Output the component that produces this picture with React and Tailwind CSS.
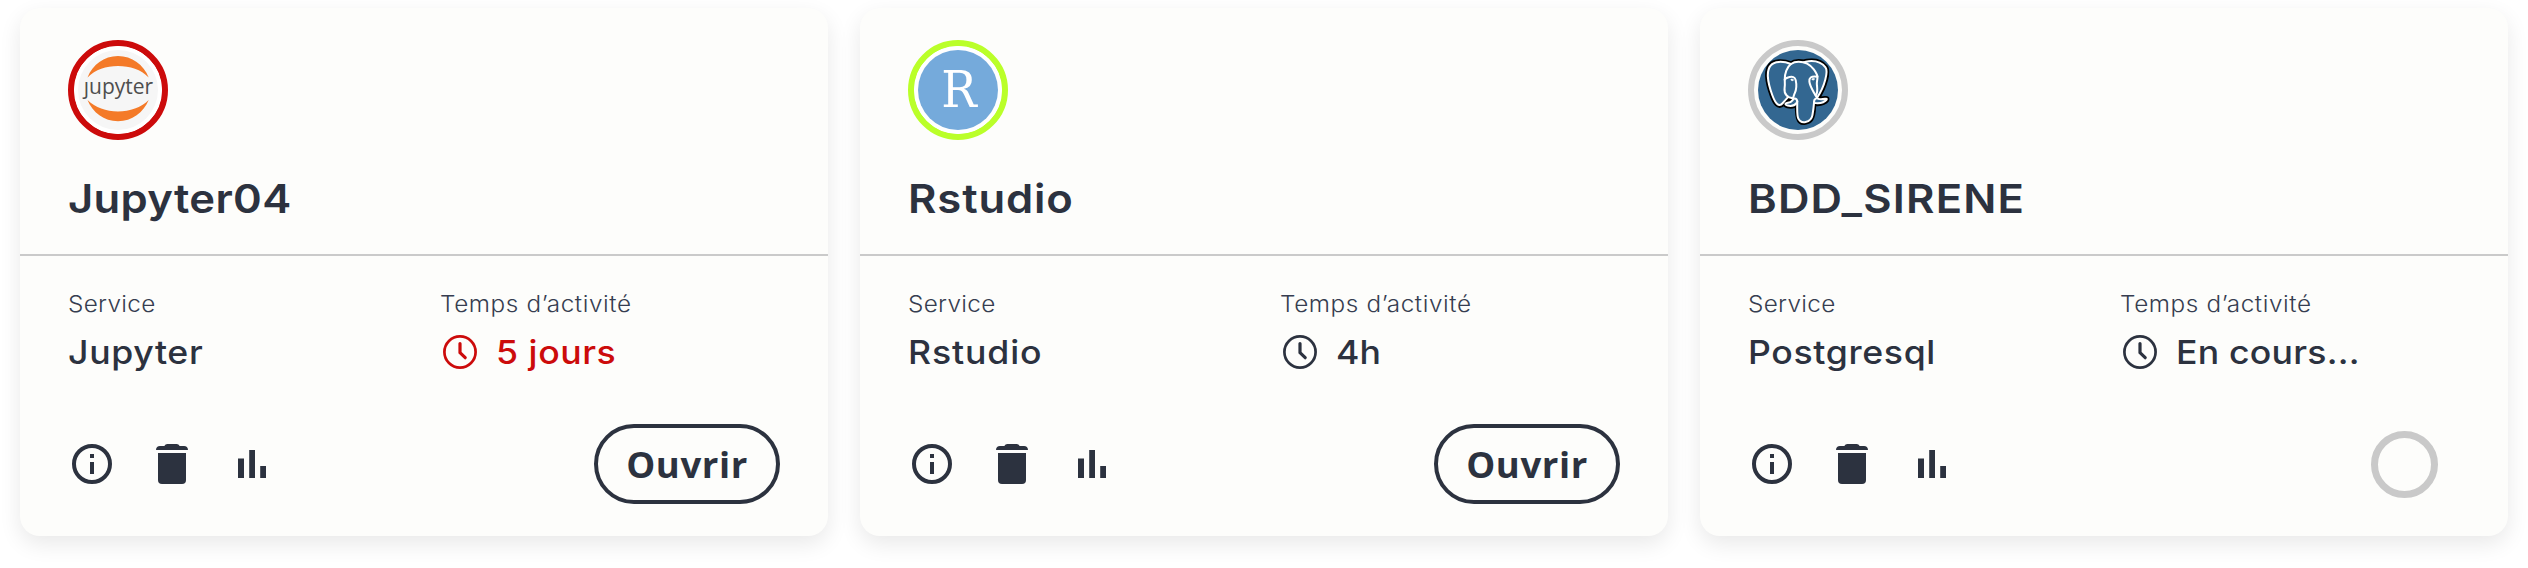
import React from "react";

function JupyterLogo() {
  return (
    <svg viewBox="0 0 100 100" className="block size-full">
      <circle cx="50" cy="50" r="50" fill="#fff" />
      <circle cx="50" cy="50" r="40" fill="#f6f6f6" />
      <path d="M19.500 37.500C24.500 24.500 36 16 50 16s25.500 8.500 30.700 21.500C73 29.500 62 26 50 26S27.500 29.500 19.500 37.500z" fill="#f47a28" />
      <path d="M19.500 60C24.500 72.500 36 81.200 50 81.200S75.500 72.500 80.700 60C73 67.500 62 71.400 50 71.400S27.500 67.500 19.500 60z" fill="#f47a28" />
      <text x="50.500" y="54.400" textAnchor="middle" fontFamily="Open Sans, Noto Sans, sans-serif" fontSize="21" fill="#4e4e4e">
        ȷupyter
      </text>
    </svg>
  );
}

function RstudioLogo() {
  return (
    <svg viewBox="0 0 100 100" className="block size-full">
      <circle cx="50" cy="50" r="50" fill="#fff" />
      <circle cx="50" cy="50" r="40" fill="#75aadb" />
      <text x="33.200" y="66.700" fontFamily="DejaVu Serif, serif" fontSize="50.500" textLength="35.500" lengthAdjust="spacingAndGlyphs" fill="#fff">
        R
      </text>
    </svg>
  );
}

function PostgresLogo() {
  return (
    <svg viewBox="0 0 100 100" className="block size-full">
      <circle cx="50" cy="50" r="40" fill="#336791" />
      <svg x="17" y="18.300" width="64.600" height="66.600" viewBox="0 0 432.071 445.383">
        <path
          fill="#000"
          stroke="#000"
          strokeWidth="37.400"
          d="M323.205,324.227c2.833-23.601,1.984-27.062,19.563-23.239l4.463,0.392c13.517,0.615,31.199-2.174,41.587-7c22.362-10.376,35.622-27.7,13.572-23.148c-50.297,10.376-53.755-6.655-53.755-6.655c53.111-78.803,75.313-178.836,56.149-203.322C352.514-5.534,262.036,26.049,260.522,26.869l-0.482,0.089c-9.938-2.062-21.06-3.294-33.554-3.496c-22.761-0.374-40.032,5.967-53.133,15.904c0,0-161.408-66.498-153.899,83.628c1.597,31.936,45.777,241.655,98.47,178.31c19.259-23.163,37.871-42.748,37.871-42.748c9.242,6.14,20.307,9.272,31.912,8.147l0.897-0.765c-0.281,2.876-0.157,5.689,0.359,9.019c-13.572,15.167-9.584,17.83-36.723,23.416c-27.457,5.659-11.326,15.734-0.797,18.367c12.768,3.193,42.305,7.716,62.268-20.224l-0.795,3.188c5.325,4.26,4.965,30.619,5.72,49.452c0.756,18.834,2.017,36.409,5.856,46.771c3.839,10.36,8.369,37.05,44.036,29.406c29.809-6.388,52.6-15.582,54.677-101.107"
        />
        <path
          fill="#336791"
          d="M402.395,271.23c-50.302,10.376-53.76-6.655-53.76-6.655c53.111-78.808,75.313-178.843,56.153-203.326c-52.27-66.785-142.752-35.2-144.262-34.38l-0.486,0.087c-9.938-2.063-21.06-3.292-33.56-3.496c-22.761-0.373-40.026,5.967-53.127,15.902c0,0-161.411-66.495-153.904,83.63c1.597,31.938,45.776,241.657,98.471,178.312c19.26-23.163,37.869-42.748,37.869-42.748c9.243,6.14,20.308,9.272,31.908,8.147l0.901-0.765c-0.28,2.876-0.152,5.689,0.361,9.019c-13.575,15.167-9.586,17.83-36.723,23.416c-27.459,5.659-11.328,15.734-0.796,18.367c12.768,3.193,42.307,7.716,62.266-20.224l-0.796,3.188c5.319,4.26,9.054,27.711,8.428,48.969c-0.626,21.259-1.044,35.854,3.147,47.254c4.191,11.4,8.368,37.05,44.042,29.406c29.809-6.388,45.256-22.942,47.405-50.555c1.525-19.631,4.976-16.729,5.194-34.28l2.768-8.309c3.192-26.611,0.507-35.196,18.872-31.203l4.463,0.392c13.517,0.615,31.208-2.174,41.591-7c22.358-10.376,35.618-27.7,13.573-23.148z"
        />
        <g fill="none" stroke="#fff" strokeWidth="13.500" strokeLinecap="round" strokeLinejoin="round">
          <path d="M215.866,286.484c-1.385,49.516,0.348,99.377,5.193,111.495c4.848,12.118,15.223,35.688,50.9,28.045c29.806-6.39,40.651-18.756,45.357-46.051c3.466-20.082,10.148-75.854,11.005-87.281" />
          <path d="M173.104,38.256c0,0-161.521-66.016-154.012,84.109c1.597,31.938,45.779,241.664,98.473,178.316c19.256-23.166,36.671-41.335,36.671-41.335" />
          <path d="M260.349,26.207c-5.591,1.753,89.848-34.889,144.087,34.417c19.159,24.484-3.043,124.519-56.153,203.329" />
          <path d="M348.282,263.953c0,0,3.461,17.036,53.764,6.653c22.04-4.552,8.776,12.774-13.577,23.155c-18.345,8.514-59.474,10.696-60.146-1.069c-1.729-30.355,21.647-21.133,19.96-28.739c-1.525-6.85-11.979-13.573-18.894-30.338c-6.037-14.633-82.796-126.849,21.287-110.183c3.813-0.789-27.146-99.002-124.553-100.599c-97.385-1.597-94.19,119.762-94.19,119.762" />
          <path d="M188.604,274.334c-13.577,15.166-9.584,17.829-36.723,23.417c-27.459,5.66-11.326,15.733-0.797,18.365c12.768,3.195,42.307,7.718,62.266-20.229c6.078-8.509-0.036-22.086-8.385-25.547c-4.034-1.671-9.428-3.765-16.361,3.994z" />
          <path d="M187.715,274.069c-1.368-8.917,2.93-19.528,7.536-31.942c6.922-18.626,22.893-37.255,10.117-96.339c-9.523-44.029-73.396-9.163-73.436-3.193c-0.039,5.968,2.889,30.26-1.067,58.548c-5.162,36.913,23.488,68.132,56.479,64.938" />
          <path d="M350.676,123.432c0.863,15.994-3.445,26.888-3.988,43.914c-0.804,24.748,11.799,53.074-7.191,81.435" />
        </g>
        <g fill="#fff" stroke="#fff" strokeWidth="4">
          <path d="M172.517,141.7c-0.288,2.039,3.733,7.48,8.976,8.207c5.234,0.73,9.714-3.522,9.998-5.559c0.284-2.039-3.732-4.285-8.977-5.015c-5.237-0.731-9.719,0.333-9.996,2.367z" />
          <path d="M331.941,137.543c0.284,2.039-3.732,7.48-8.976,8.207c-5.238,0.73-9.718-3.522-10.005-5.559c-0.277-2.039,3.74-4.285,8.979-5.015c5.239-0.73,9.718,0.333,10.002,2.368z" />
        </g>
      </svg>
    </svg>
  );
}

function ClockIcon() {
  return (
    <svg viewBox="0 0 40 40" className="block size-10 shrink-0" fill="none" stroke="currentColor" strokeLinecap="round" strokeLinejoin="round">
      <circle cx="20" cy="20" r="15.600" strokeWidth="2.700" />
      <path d="M20 11.500v9.200l5.200 5" strokeWidth="3.200" />
    </svg>
  );
}

function InfoIcon() {
  return (
    <svg viewBox="0 0 24 24" className="block size-12" fill="currentColor">
      <circle cx="12" cy="12" r="9" fill="none" stroke="currentColor" strokeWidth="2" />
      <path d="M11 7h2v2h-2zM11 11h2v6h-2z" />
    </svg>
  );
}

function TrashIcon() {
  return (
    <svg viewBox="0 0 24 24" className="block size-12" fill="currentColor">
      <path d="M4 5c0-1.200.8-2 2-2h2.200c.3-.6.800-1 1.500-1h4.600c.7 0 1.200.4 1.500 1H18c1.200 0 2 .8 2 2z" />
      <path d="M5 6.500h14V20a2 2 0 0 1-2 2H7a2 2 0 0 1-2-2z" />
    </svg>
  );
}

function BarsIcon() {
  return (
    <svg viewBox="0 0 24 24" className="block size-12" fill="currentColor">
      <path d="M5 9.200h3V19H5zM10.600 5h2.900v14h-2.900zM16.100 13H19v6h-2.900z" />
    </svg>
  );
}

const services = [
  {
    title: "Jupyter04",
    titleClass: "tracking-[0.3px]",
    ring: "border-[#cc0b0b]",
    Logo: JupyterLogo,
    service: "Jupyter",
    serviceClass: "tracking-[0.6px]",
    uptime: "5 jours",
    uptimeClass: "tracking-[0.5px]",
    late: true,
    ready: true,
  },
  {
    title: "Rstudio",
    titleClass: "tracking-[0.8px]",
    ring: "border-[#baff29]",
    Logo: RstudioLogo,
    service: "Rstudio",
    serviceClass: "tracking-[0.8px]",
    uptime: "4h",
    uptimeClass: "tracking-[0px]",
    ready: true,
  },
  {
    title: "BDD_SIRENE",
    titleClass: "tracking-[1.1px]",
    ring: "border-[#c9c9c9]",
    Logo: PostgresLogo,
    service: "Postgresql",
    serviceClass: "tracking-[0.6px]",
    uptime: "En cours...",
    uptimeClass: "tracking-[0.2px]",
    ready: false,
  },
];

function Field({ label, labelClass, children }) {
  return (
    <div className="flex min-w-0 flex-col gap-2">
      <div className={`origin-left scale-x-[1.08] text-[22.500px] leading-8 font-light text-[#363d50] ${labelClass}`}>{label}</div>
      <div className="flex h-12 items-center gap-4 text-[33px] leading-[48px] font-medium whitespace-nowrap">{children}</div>
    </div>
  );
}

function ServiceCard({ title, titleClass, ring, Logo, service, serviceClass, uptime, uptimeClass, late, ready }) {
  return (
    <article className="flex flex-col rounded-[20px] bg-[#fdfdfb] shadow-[0_8px_22px_rgba(0,0,0,0.09)]">
      <header className="flex flex-col items-start gap-9 border-b-2 border-[#cacaca] px-12 py-8">
        <div className={`size-[100px] overflow-hidden rounded-full border-[6px] ${ring}`}>
          <div className="-m-[6px] size-[100px] [clip-path:circle(44px)]">
            <Logo />
          </div>
        </div>
        <h2 className={`origin-left scale-x-[1.09] text-[40px] leading-[46px] font-semibold ${titleClass}`}>{title}</h2>
      </header>
      <div className="grid grid-cols-2 gap-8 px-12 pt-8">
        <Field label="Service" labelClass="tracking-[0.3px]">
          <span className={`origin-left scale-x-[1.08] ${serviceClass}`}>{service}</span>
        </Field>
        <Field label="Temps d’activité" labelClass="tracking-[0.55px]">
          <div className={`flex items-center gap-4 ${late ? "text-[#cc0b0b]" : ""}`}>
            <ClockIcon />
            <span className={`origin-left scale-x-[1.08] ${uptimeClass}`}>{uptime}</span>
          </div>
        </Field>
      </div>
      <footer className="flex items-center justify-between px-12 pt-12 pb-8">
        <div className="flex gap-8">
          <button type="button"><InfoIcon /></button>
          <button type="button"><TrashIcon /></button>
          <button type="button"><BarsIcon /></button>
        </div>
        {ready ? (
          <button
            type="button"
            className="flex h-20 w-[186px] items-center justify-center rounded-full border-4 border-[#2c323f] font-['Open_Sans','Noto_Sans',sans-serif] text-[36.500px] leading-none font-bold tracking-[0.600px]"
          >
            Ouvrir
          </button>
        ) : (
          <div className="flex h-20 items-center pr-[22px]">
            <div className="size-[67px] rounded-full border-[7px] border-[#c9c9c9]" />
          </div>
        )}
      </footer>
    </article>
  );
}

export default function App() {
  return (
    <main className="grid h-[568px] grid-cols-3 content-start gap-8 overflow-hidden bg-white px-5 pt-2 font-['Inter','Noto_Sans',sans-serif] text-[#2c323f]">
      {services.map((s) => (
        <ServiceCard key={s.title} {...s} />
      ))}
    </main>
  );
}
